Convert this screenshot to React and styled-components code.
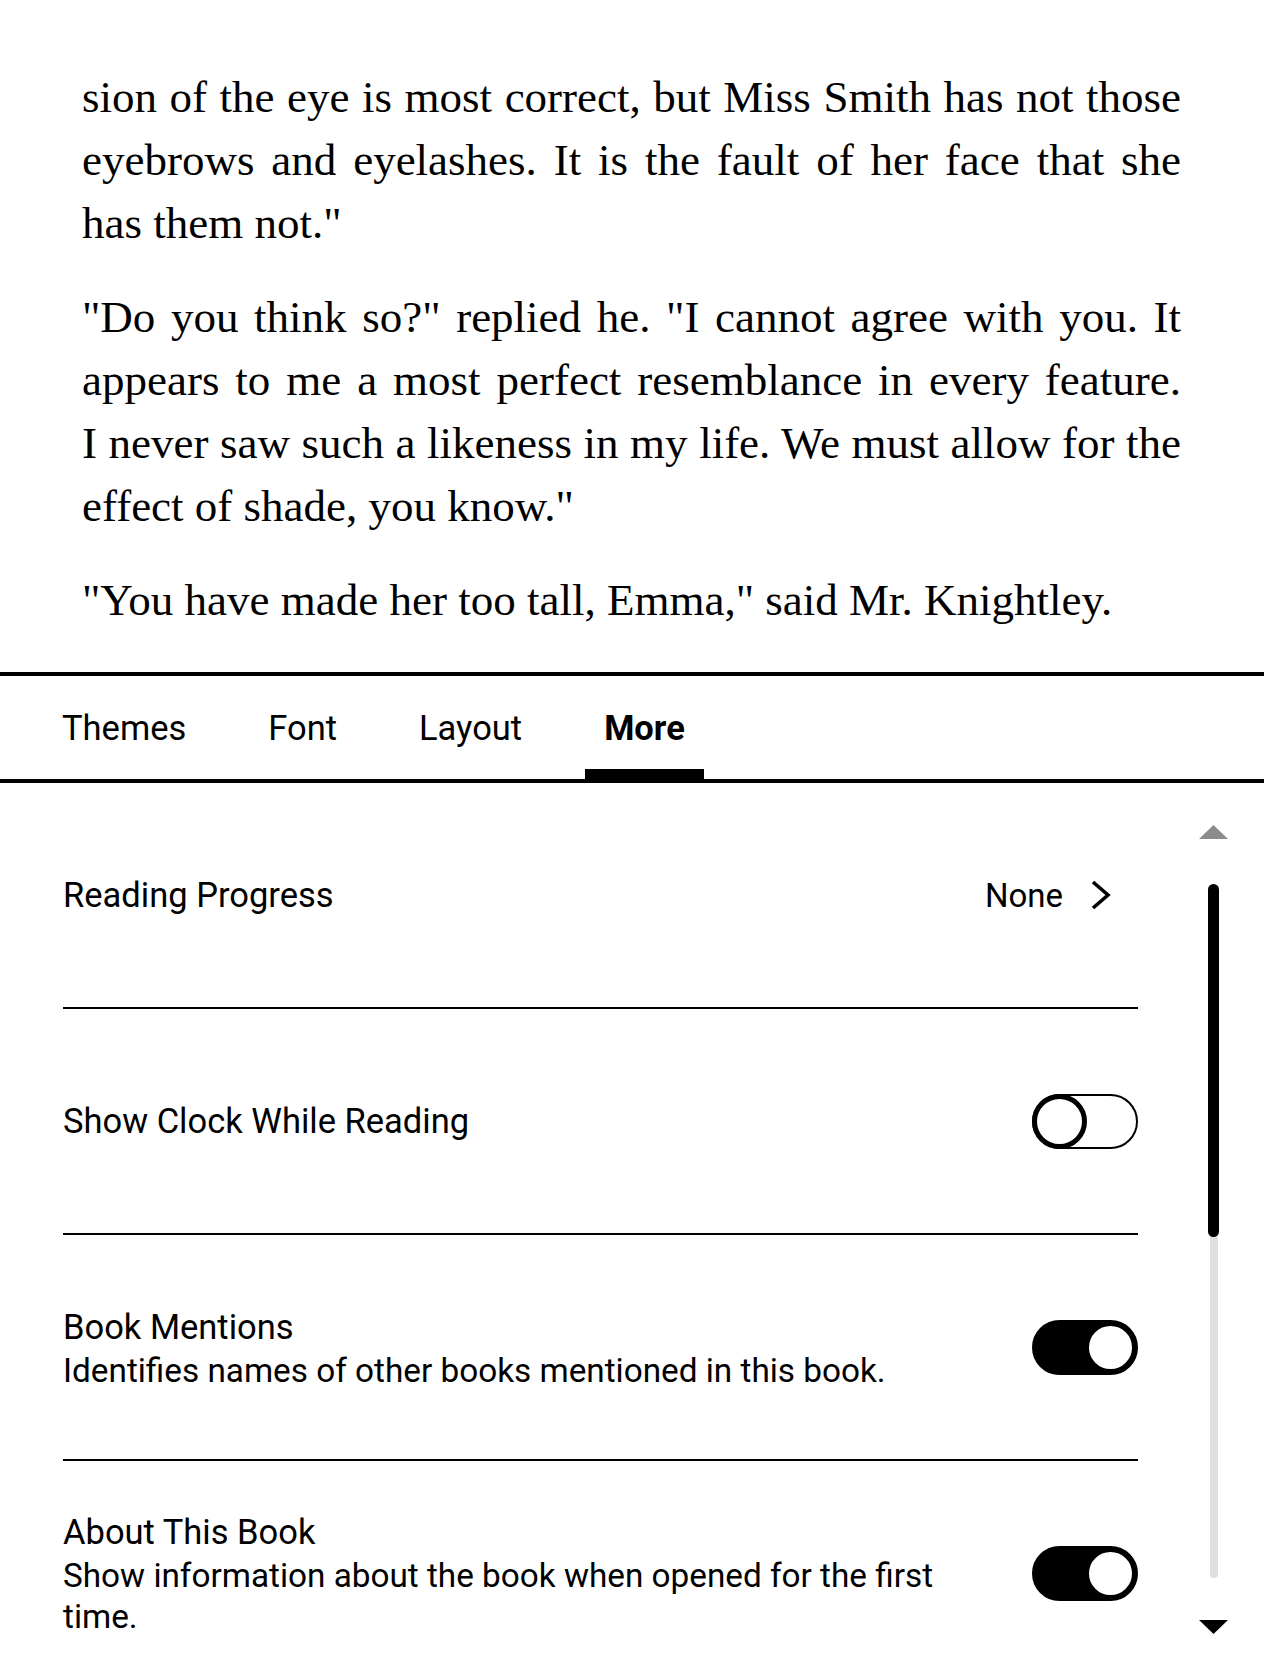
import React from 'react';
import styled, { createGlobalStyle } from 'styled-components';

const GlobalStyle = createGlobalStyle`
  html, body {
    margin: 0;
    padding: 0;
    background: #fff;
  }
  * {
    box-sizing: border-box;
  }
`;

const paragraphs = [
  [
    'sion of the eye is most correct, but Miss Smith has not those',
    'eyebrows and eyelashes. It is the fault of her face that she',
    'has them not."',
  ],
  [
    '"Do you think so?" replied he. "I cannot agree with you. It',
    'appears to me a most perfect resemblance in every feature.',
    'I never saw such a likeness in my life. We must allow for the',
    'effect of shade, you know."',
  ],
  ['"You have made her too tall, Emma," said Mr. Knightley.'],
];

const tabs = ['Themes', 'Font', 'Layout', 'More'];

const Chevron = () => (
  <svg width="22" height="30" viewBox="0 0 22 30">
    <polyline points="3,2 18,15 3,28" fill="none" stroke="#000" strokeWidth="3.6" />
  </svg>
);

const Arrow = ({ down }) => (
  <svg width="29" height="14" viewBox="0 0 29 14">
    {down ? (
      <polygon points="0,0 29,0 14.5,14" fill="#000" />
    ) : (
      <polygon points="0,14 29,14 14.5,0" fill="#8c8c8c" />
    )}
  </svg>
);

const App = () => {
  return (
    <Page>
      <GlobalStyle />
      <Reader>
        {paragraphs.map((lines, i) => (
          <Paragraph key={i}>
            {lines.map((line, j) => (
              <Line key={j} $last={j === lines.length - 1}>
                {line}
              </Line>
            ))}
          </Paragraph>
        ))}
      </Reader>

      <TabBar>
        {tabs.map((t) => (
          <Tab key={t} $active={t === 'More'}>
            {t}
          </Tab>
        ))}
      </TabBar>

      <Panel>
        <List>
          <Row>
            <Title>Reading Progress</Title>
            <Value>
              <span>None</span>
              <Chevron />
            </Value>
          </Row>
          <Row>
            <Title>Show Clock While Reading</Title>
            <Toggle $on={false}>
              <Knob $on={false} />
            </Toggle>
          </Row>
          <Row>
            <TextBlock>
              <Title>Book Mentions</Title>
              <Subtitle>Identifies names of other books mentioned in this book.</Subtitle>
            </TextBlock>
            <Toggle $on>
              <Knob $on />
            </Toggle>
          </Row>
          <Row>
            <TextBlock>
              <Title>About This Book</Title>
              <Subtitle>
                Show information about the book when opened for the first time.
              </Subtitle>
            </TextBlock>
            <Toggle $on>
              <Knob $on />
            </Toggle>
          </Row>
        </List>

        <ScrollColumn>
          <Arrow />
          <Track>
            <Thumb />
          </Track>
          <Arrow down />
        </ScrollColumn>
      </Panel>
    </Page>
  );
};

const Page = styled.div`
  width: 1264px;
  height: 1680px;
  overflow: hidden;
  background: #fff;
  color: #000;
`;

const Reader = styled.section`
  padding: 66px 83px 0 82px;
  font-family: 'Liberation Serif', 'DejaVu Serif', serif;
  font-size: 45px;
  line-height: 63px;
`;

const Paragraph = styled.p`
  margin: 0 0 31px;
  &:last-child {
    margin-bottom: 0;
  }
`;

const Line = styled.span`
  display: block;
  text-align: justify;
  text-align-last: ${(p) => (p.$last ? 'left' : 'justify')};
`;

const TabBar = styled.nav`
  display: flex;
  gap: 44px;
  height: 111px;
  margin-top: 40px;
  padding-left: 43px;
  border-top: 4px solid #000;
  border-bottom: 4px solid #000;
  font-family: Roboto, 'Noto Sans', sans-serif;
  font-size: 34.5px;
`;

const Tab = styled.div`
  display: flex;
  align-items: center;
  padding: 10px 19px 0;
  border-bottom: 10px solid ${(p) => (p.$active ? '#000' : 'transparent')};
  font-weight: ${(p) => (p.$active ? 700 : 400)};
`;

const Panel = styled.div`
  display: flex;
  gap: 61px;
  padding: 0 36px 0 63px;
  font-family: Roboto, 'Noto Sans', sans-serif;
`;

const List = styled.div`
  flex: 1;
  display: flex;
  flex-direction: column;
`;

const Row = styled.div`
  display: flex;
  align-items: center;
  justify-content: space-between;
  min-height: 226px;
  border-bottom: 2px solid #000;
  flex-shrink: 0;
`;

const TextBlock = styled.div`
  display: flex;
  flex-direction: column;
  max-width: 885px;
`;

const Title = styled.div`
  font-size: 34.5px;
  line-height: 46px;
`;

const Subtitle = styled.div`
  font-size: 33.3px;
  line-height: 41px;
`;

const Value = styled.div`
  display: flex;
  align-items: center;
  gap: 27px;
  margin-right: 26px;
  font-size: 33px;
`;

const Toggle = styled.span`
  display: flex;
  align-items: center;
  justify-content: ${(p) => (p.$on ? 'flex-end' : 'flex-start')};
  width: 106px;
  height: 55px;
  border-radius: 28px;
  border: 2px solid #000;
  background: ${(p) => (p.$on ? '#000' : '#fff')};
  flex-shrink: 0;
`;

const Knob = styled.span`
  width: ${(p) => (p.$on ? '51px' : '55px')};
  height: ${(p) => (p.$on ? '51px' : '55px')};
  margin: ${(p) => (p.$on ? '0' : '0 0 0 -2px')};
  border-radius: 50%;
  border: ${(p) => (p.$on ? '4px' : '5px')} solid #000;
  background: #fff;
`;

const ScrollColumn = styled.div`
  display: flex;
  flex-direction: column;
  align-items: center;
  width: 29px;
  padding-top: 42px;
  gap: 45px;
  & > svg:last-child {
    margin-top: -3px;
  }
`;

const Track = styled.div`
  display: flex;
  flex-direction: column;
  align-items: center;
  width: 8px;
  height: 694px;
  background: #e0e0e0;
  border-radius: 4px;
`;

const Thumb = styled.div`
  width: 11px;
  height: 353px;
  flex-shrink: 0;
  background: #000;
  border-radius: 6px;
`;

export default App;
